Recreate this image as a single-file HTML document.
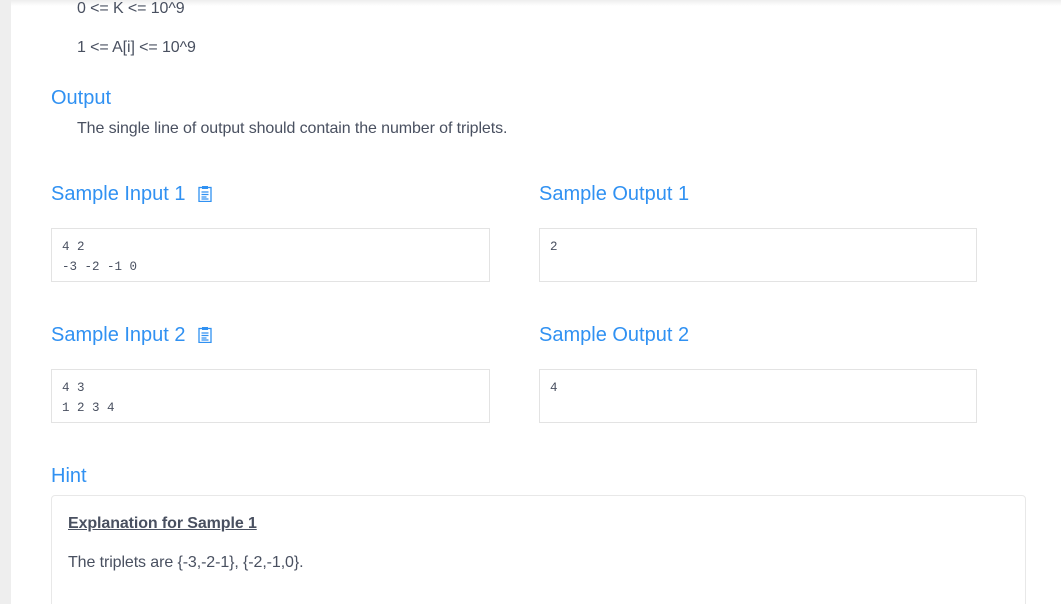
<!DOCTYPE html>
<html style="overflow:hidden;height:604px"><head><meta charset="utf-8"><style>
*{margin:0;padding:0;box-sizing:border-box}
body{width:1061px;height:604px;overflow:hidden;background:#fff;font-family:"Liberation Sans",sans-serif;color:#495060;position:relative}
.bar{position:absolute;left:0;top:0;width:11px;height:604px;background:#eee}
.shadow{position:absolute;left:11px;right:0;top:0;height:6px;background:linear-gradient(#eee,#fff)}
.t{position:absolute;font-size:16px;white-space:nowrap;letter-spacing:-0.1px}
.h{position:absolute;font-size:20px;color:#3091f2;white-space:nowrap}
.box{position:absolute;border:1px solid #e3e3e3;background:#fff;font-family:"Liberation Mono",monospace;font-size:12.5px;color:#495060;padding:8px 10px;line-height:20px;white-space:pre}
.ic{display:inline-block;vertical-align:-2px;margin-left:12px}
</style></head><body>
<div class="bar"></div><div class="shadow"></div>
<div class="t" style="left:77px;top:0px">0 &lt;= K &lt;= 10^9</div>
<div class="t" style="left:77px;top:39px">1 &lt;= A[i] &lt;= 10^9</div>
<div class="h" style="left:51px;top:87px">Output</div>
<div class="t" style="left:77px;top:120px">The single line of output should contain the number of triplets.</div>
<div class="h" style="left:51px;top:183px">Sample Input 1<svg class="ic" width="14" height="17" viewBox="0 0 14 17"><rect x="1" y="2.5" width="12" height="14" fill="none" stroke="#3091f2" stroke-width="1.3"/><rect x="4" y="1" width="6" height="3" fill="#3091f2"/><path d="M3.5 7h7M3.5 9.5h7M3.5 12h5M3.5 14h7" stroke="#3091f2" stroke-width="1.2"/></svg></div>
<div class="h" style="left:539px;top:183px">Sample Output 1</div>
<div class="box" style="left:51px;top:228px;width:439px;height:54px">4 2
-3 -2 -1 0</div>
<div class="box" style="left:539px;top:228px;width:438px;height:54px">2</div>
<div class="h" style="left:51px;top:324px">Sample Input 2<svg class="ic" width="14" height="17" viewBox="0 0 14 17"><rect x="1" y="2.5" width="12" height="14" fill="none" stroke="#3091f2" stroke-width="1.3"/><rect x="4" y="1" width="6" height="3" fill="#3091f2"/><path d="M3.5 7h7M3.5 9.5h7M3.5 12h5M3.5 14h7" stroke="#3091f2" stroke-width="1.2"/></svg></div>
<div class="h" style="left:539px;top:324px">Sample Output 2</div>
<div class="box" style="left:51px;top:369px;width:439px;height:54px">4 3
1 2 3 4</div>
<div class="box" style="left:539px;top:369px;width:438px;height:54px">4</div>
<div class="h" style="left:51px;top:465px">Hint</div>
<div style="position:absolute;left:51px;top:495px;width:975px;height:130px;border:1px solid #e8e8e8;border-radius:4px"></div>
<div class="t" style="left:68px;top:515px;font-weight:bold;text-decoration:underline">Explanation for Sample 1</div>
<div class="t" style="left:68px;top:554px">The triplets are {-3,-2-1}, {-2,-1,0}.</div>
</body></html>
